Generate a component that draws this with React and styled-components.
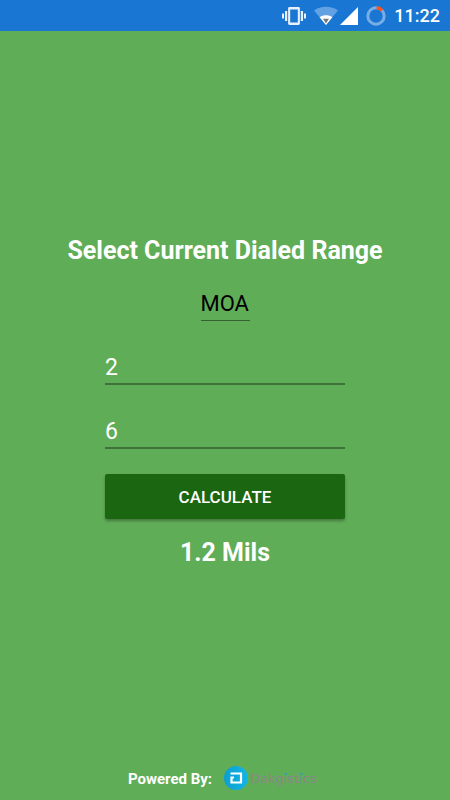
import React, { useState } from 'react';
import styled, { createGlobalStyle } from 'styled-components';

const App = () => {

  const [unit, setUnit] = useState('MOA')
  const [current, setCurrent] = useState('2')
  const [target, setTarget] = useState('6')
  const [result, setResult] = useState('1.2 Mils')

  const calculate = (e) => {
    e.preventDefault()
    const diff = Number(target) - Number(current)
    // 1 MOA is roughly 0.29 mils
    setResult(unit === 'MOA' ? `${(diff * 0.29).toFixed(1)} Mils` : `${(diff / 0.29).toFixed(1)} MOA`)
  }

  return (
    <>
      <GlobalStyle />
      <PageWrapper>
        <StatusBar>
          <VibrateIcon />
          <WifiIcon />
          <SignalIcon />
          <BatteryIcon />
          <Clock>11:22</Clock>
        </StatusBar>
        <FormContainer onSubmit={calculate}>
          <Title>Select Current Dialed Range</Title>
          <UnitSelect aria-label="Unit" value={unit} onChange={(e) => setUnit(e.target.value)}>
            <option>MOA</option>
            <option>MIL</option>
          </UnitSelect>
          <FieldsContainer>
            <Field aria-label="Current range" inputMode="decimal" value={current} onChange={(e) => setCurrent(e.target.value)} />
            <Field aria-label="Target range" inputMode="decimal" value={target} onChange={(e) => setTarget(e.target.value)} />
          </FieldsContainer>
          <CalculateButton type="submit">CALCULATE</CalculateButton>
          <Result>{result}</Result>
        </FormContainer>
        <Footer>
          <PoweredBy>Powered By:</PoweredBy>
          <Logo />
        </Footer>
      </PageWrapper>
    </>
  )
};

const VibrateIcon = () => (
  <svg width="24" height="20" viewBox="0 0 24 20" fill="#e8f1fb" aria-hidden="true">
    <path fillRule="evenodd" d="M7.500 1h9a1.400 1.400 0 0 1 1.400 1.400v15.200a1.400 1.400 0 0 1-1.400 1.400h-9a1.400 1.400 0 0 1-1.400-1.400V2.400A1.400 1.400 0 0 1 7.500 1zM8.200 3.600v12.800h7.600V3.600z" />
    <path d="M3 5h2.200v10H3zM18.800 5H21v10h-2.200zM0 7.500h2v5H0zM22 7.500h2v5h-2z" />
  </svg>
)

const WifiIcon = () => (
  <svg width="24" height="20" viewBox="0 0 24 20" aria-hidden="true">
    <path fill="#62a1e3" d="M12 19 0 4.400C3.400 2 7.500.8 12 .8s8.600 1.200 12 3.600z" />
    <path fill="#fff" d="M12 19 5.600 11.200C7.600 9.900 9.700 9.300 12 9.300s4.400.6 6.400 1.900z" />
    <path fill="#777" d="M9 12.800h6L12 17.400z" />
  </svg>
)

const SignalIcon = () => (
  <svg width="18" height="20" viewBox="0 0 18 20" aria-hidden="true">
    <path fill="#fff" d="M18 1v18H0z" />
  </svg>
)

const BatteryIcon = () => (
  <svg width="20" height="20" viewBox="0 0 20 20" fill="none" strokeWidth="3" aria-hidden="true">
    <circle cx="10" cy="10" r="8.200" stroke="#77aee8" />
    <path d="M10.600 1.800A8.200 8.200 0 0 1 16 4.400" stroke="#ff5419" strokeWidth="3.400" />
  </svg>
)

const Logo = () => (
  <svg width="98" height="26" viewBox="0 0 98 26" role="img" aria-label="Dakgistics">
    <defs>
      <linearGradient id="badge" x1="0" y1="0" x2="1" y2="0">
        <stop offset="0" stopColor="#0c9fd0" />
        <stop offset="1" stopColor="#12b5e6" />
      </linearGradient>
    </defs>
    <circle cx="12" cy="12" r="12" fill="url(#badge)" />
    <path d="M6.500 7.500h10.500v9H7.500v-5h2.500" fill="none" stroke="#fff" strokeWidth="2.200" />
    <LogoText x="26" y="17">Dakgistics</LogoText>
    <path d="M60.800 7h2v2h-2zM76.300 7h2v2h-2z" fill="#2b9fc0" />
  </svg>
)

export default App;

const GlobalStyle = createGlobalStyle`
    * {
        box-sizing: border-box;
    }

    body {
        margin: 0;
        background-color: #60ad57;
        font-family: Roboto, 'Liberation Sans', sans-serif;
    }
`
const PageWrapper = styled.div`
    width: 100%;
    min-height: 100vh;
    background-color: #60ad57;
    display: flex;
    flex-direction: column;
`
const StatusBar = styled.header`
    height: 31px;
    background-color: #1976d2;
    display: flex;
    align-items: center;
    justify-content: flex-end;
    padding-right: 10px;

    > svg {
        margin-right: 8px;
    }

    > svg:nth-child(2) {
        margin-right: 2px;
    }
`
const Clock = styled.time`
    color: #fff;
    font-size: 18px;
    line-height: 24px;
    font-weight: 500;
`
const FormContainer = styled.form`
    flex: 1;
    display: flex;
    flex-direction: column;
    justify-content: center;
    align-items: center;
    padding-top: 16px;
`
const Title = styled.h1`
    margin: 0 0 20px;
    color: #fff;
    font-size: 25px;
    line-height: 32px;
    font-weight: 700;
    text-align: center;
`
const UnitSelect = styled.select`
    appearance: none;
    height: 34px;
    margin-bottom: 30px;
    padding: 0;
    border: 0;
    border-bottom: 1px solid #356030;
    border-radius: 0;
    background: transparent;
    color: #000;
    font-family: inherit;
    font-size: 22px;
    outline: none;
`
const FieldsContainer = styled.div`
    width: 240px;
    display: flex;
    flex-direction: column;
    gap: 30px;
    margin-bottom: 25px;
`
const Field = styled.input`
    width: 100%;
    height: 34px;
    padding: 0;
    border: 0;
    border-bottom: 2px solid #3f7239;
    background: transparent;
    color: #fff;
    font-family: inherit;
    font-size: 23px;
    outline: none;
`
const CalculateButton = styled.button`
    width: 240px;
    height: 45px;
    margin-bottom: 18px;
    border: 0;
    border-radius: 2px;
    background-color: #1b6611;
    box-shadow: 0 2px 3px rgba(0, 0, 0, 0.3);
    color: #fff;
    font-family: inherit;
    font-size: 17px;
    font-weight: 500;
    cursor: pointer;
`
const Result = styled.output`
    color: #fff;
    font-size: 25px;
    line-height: 32px;
    font-weight: 700;
`
const Footer = styled.footer`
    height: 43px;
    display: flex;
    justify-content: center;
    align-items: center;
    gap: 12px;
`
const PoweredBy = styled.span`
    color: #fff;
    font-size: 15px;
    line-height: 24px;
    font-weight: 700;
`
const LogoText = styled.text`
    fill: #8a868c;
    font-family: 'DejaVu Sans', sans-serif;
    font-size: 13px;
`
